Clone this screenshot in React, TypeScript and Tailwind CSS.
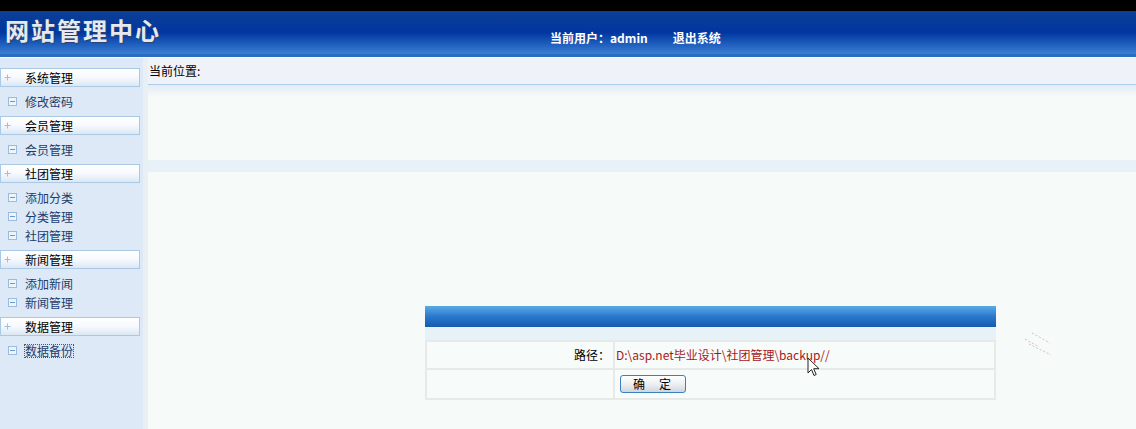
import React from 'react';

type Group = { title: string; items: string[] };

const groups: Group[] = [
  { title: '系统管理', items: ['修改密码'] },
  { title: '会员管理', items: ['会员管理'] },
  { title: '社团管理', items: ['添加分类', '分类管理', '社团管理'] },
  { title: '新闻管理', items: ['添加新闻', '新闻管理'] },
  { title: '数据管理', items: ['数据备份'] },
];

const font = { fontFamily: '"Noto Sans CJK SC", "Liberation Sans", sans-serif' };

const PlusIcon = () => (
  <svg width="7" height="7" viewBox="0 0 7 7" className="shrink-0">
    <path d="M3.5 0.5v6M0.5 3.5h6" stroke="#9cc0e4" strokeWidth="1" />
  </svg>
);

const BoxIcon = () => (
  <svg width="9" height="9" viewBox="0 0 9 9" className="shrink-0">
    <rect x="0.5" y="0.5" width="8" height="8" fill="#eef4fb" stroke="#9bbbe0" />
    <path d="M2 4.5h5" stroke="#6e98c8" />
  </svg>
);

const Cursor = () => (
  <svg width="14" height="20" viewBox="0 0 14 20" className="absolute left-[807px] top-[357px]">
    <path d="M1 1v15l3.5-3.5 2.5 6 2.2-1-2.5-5.8H12z" fill="#fff" stroke="#222" strokeWidth="1" />
  </svg>
);

const Dashes = () => (
  <svg width="30" height="24" viewBox="0 0 30 24" className="absolute left-[1024px] top-[332px]">
    <g stroke="#e0b8c0" strokeWidth="1" strokeDasharray="2 2">
      <path d="M1 7l14 8" />
      <path d="M8 1l18 10" />
      <path d="M5 12l22 11" />
    </g>
  </svg>
);

function Sidebar() {
  return (
    <div className="w-[148px] shrink-0 bg-[#dde9f6] border-r-[5px] border-r-[#e8f0f6] pt-[10px]">
      {groups.map((g) => (
        <div key={g.title}>
          <div className="w-[140px] h-[19px] flex items-center border border-[#aac9e6] bg-gradient-to-b from-white via-[#f6f9fd] to-[#dbe7f4]">
            <span className="pl-[3px] w-[24px]"><PlusIcon /></span>
            <span className="text-[12px] leading-none text-black">{g.title}</span>
          </div>
          <div className="pt-[5px] pb-[5px]">
            {g.items.map((it) => (
              <div key={it + g.title} className="h-[19px] flex items-center">
                <span className="pl-[8px] w-[25px]"><BoxIcon /></span>
                <span
                  className={
                    it === '数据备份'
                      ? 'text-[12px] leading-none text-[#1c3c6c] outline outline-1 outline-dotted outline-[#555]'
                      : 'text-[12px] leading-none text-[#1c3c6c]'
                  }
                >
                  {it}
                </span>
              </div>
            ))}
          </div>
        </div>
      ))}
    </div>
  );
}

function BackupPanel() {
  return (
    <div className="w-[571px] ml-[277px] mt-[134px]">
      <div className="h-[21px] bg-gradient-to-b from-[#5aaae6] via-[#2a78cc] to-[#165ab0]" />
      <div className="h-[13px] bg-[#e6f1f8]" />
      <div className="border-2 border-[#e6ebe9] bg-[#f7fbf9]">
        <div className="flex h-[28px] border-b-2 border-[#e6ebe9]">
          <div className="w-[188px] border-r-2 border-[#e6ebe9] flex items-center justify-end pr-[3px] text-[12px] text-black">
            路径：
          </div>
          <div className="flex-1 flex items-center pl-[1px] text-[12px] text-[#a81818]">
            D:\asp.net毕业设计\社团管理\backup//
          </div>
        </div>
        <div className="flex h-[28px]">
          <div className="w-[188px] border-r-2 border-[#e6ebe9]" />
          <div className="flex-1 flex items-center pl-[5px]">
            <button className="w-[66px] h-[18px] rounded-[3px] border border-[#3a7fbe] bg-gradient-to-b from-white via-[#eef0f2] to-[#cfd6de] text-[12px] leading-none text-black tracking-[14px] pl-[12px]">
              确定
            </button>
          </div>
        </div>
      </div>
    </div>
  );
}

export default function App() {
  return (
    <div className="relative w-[1136px] h-[429px] overflow-hidden flex flex-col bg-[#f6faf8]" style={font}>
      <div className="h-[11px] bg-black shrink-0" />
      <div className="h-[47px] shrink-0 flex flex-col">
        <div className="flex-1 flex items-center bg-gradient-to-b from-[#0c3f96] via-[#0236a0] to-[#3a7fd4]">
          <div className="w-[550px] pl-[5px] pb-[3px]">
            <span className="text-[24px] font-bold leading-none tracking-[2px] text-[#e6e9ee] [text-shadow:1px_1px_1px_#33406a]">
              网站管理中心
            </span>
          </div>
          <div className="flex items-center pt-[10px] text-[12px] font-bold text-white">
            <span>当前用户：admin</span>
            <span className="ml-[25px]">退出系统</span>
          </div>
        </div>
        <div className="h-[3px] bg-[#2a6cc0]" />
        <div className="h-[1px] bg-white" />
      </div>
      <div className="flex flex-1">
        <Sidebar />
        <div className="flex-1 flex flex-col">
          <div className="h-[27px] flex items-center pl-[1px] bg-[#eff2f8] border-b border-[#a9cdea] text-[12px] text-black">
            当前位置:
          </div>
          <div className="h-[12px] bg-gradient-to-b from-[#e3ebf5] to-[#f6faf8]" />
          <div className="h-[63px]" />
          <div className="h-[12px] bg-[#e7f1f7]" />
          <BackupPanel />
        </div>
      </div>
      <Cursor />
      <Dashes />
    </div>
  );
}
